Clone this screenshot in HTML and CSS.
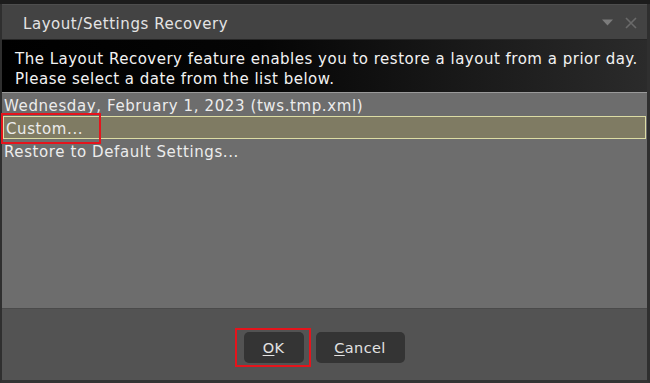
FILE: index.html
```html
<!DOCTYPE html>
<html>
<head>
<meta charset="utf-8">
<link rel="stylesheet" href="styles.css">
</head>
<body>
<div class="screen">
  <div class="topstrip"></div>
  <div class="dialog">
    <div class="titlebar">
      <span class="title">Layout/Settings Recovery</span>
      <span class="tools">
        <svg class="tri" width="11" height="7" viewBox="0 0 11 7"><path d="M0 0.5 H11 L5.5 6.5 Z" fill="#7c7c7c"/></svg>
        <svg class="close" width="12" height="12" viewBox="0 0 12 12"><path d="M1 1 L11 11 M11 1 L1 11" stroke="#6a6a6a" stroke-width="1.6"/></svg>
      </span>
    </div>
    <div class="message">
      <p>The Layout Recovery feature enables you to restore a layout from a prior day.</p>
      <p>Please select a date from the list below.</p>
    </div>
    <div class="list">
      <div class="row">Wednesday, February 1, 2023 (tws.tmp.xml)</div>
      <div class="row selected">Custom...</div>
      <div class="row">Restore to Default Settings...</div>
      <div class="mark mark-custom"></div>
    </div>
    <div class="footer">
      <button class="btn btn-ok"><u>O</u>K</button>
      <button class="btn btn-cancel"><u>C</u>ancel</button>
      <div class="mark mark-ok"></div>
    </div>
  </div>
</div>
</body>
</html>
```

FILE: styles.css
```css
* { box-sizing: border-box; }
html, body { margin: 0; padding: 0; }
body {
  background: #1e1e1e;
  font-family: "DejaVu Sans", Verdana, sans-serif;
}
.screen {
  width: 650px;
  height: 383px;
  display: flex;
  flex-direction: column;
  overflow: hidden;
}
.topstrip {
  height: 4px;
  background: #1c1c1c;
  flex: none;
}
.dialog {
  flex: 1;
  display: flex;
  flex-direction: column;
  border-left: 2px solid #2f2f2f;
  border-right: 3px solid #2f2f2f;
  border-bottom: 3px solid #333;
  background: #535353;
}
.titlebar {
  height: 35px;
  flex: none;
  background: #434343;
  border-top: 1px solid #4e4e4e;
  display: flex;
  align-items: center;
  justify-content: space-between;
  padding: 0 10px 0 21px;
  color: #e4e4e4;
  font-size: 15px;
  letter-spacing: 0.55px;
}
.title { padding-top: 3px; }
.tools {
  display: flex;
  align-items: center;
  gap: 12px;
  padding-top: 1px;
}
.message {
  height: 53px;
  flex: none;
  background: linear-gradient(to right, #000 0%, #050505 40%, #2b2b2b 100%);
  border-top: 1px solid #262626;
  padding: 9px 0 0 13px;
  color: #f2f2f2;
  font-size: 15px;
  letter-spacing: 0.5px;
  line-height: 20px;
}
.message p { margin: 0; white-space: nowrap; }
.list {
  flex: 1;
  position: relative;
  background: #6d6d6d;
  border-top: 1px solid #9a9a9a;
  color: #ececec;
  font-size: 15px;
  letter-spacing: 0.6px;
}
.row {
  height: 23px;
  padding: 4px 0 0 2px;
  line-height: 19px;
  white-space: nowrap;
}
.row.selected {
  background: #7f7b63;
  border: 1px solid #dcdca4;
  padding: 3px 0 0 2px;
  line-height: 19px;
  margin: 0 1px 0 1px;
}
.footer {
  height: 72px;
  flex: none;
  position: relative;
  background: #535353;
  border-top: 1px solid #4a4a4a;
  display: flex;
  justify-content: center;
  align-items: flex-start;
  gap: 12px;
  padding: 23px 0 0 0;
}
.btn {
  height: 31px;
  background: #343434;
  border: none;
  border-radius: 5px;
  color: #e2e2e2;
  font-family: "DejaVu Sans", Verdana, sans-serif;
  font-size: 14.5px;
  letter-spacing: 0.4px;
  padding: 0;
}
.btn u { text-underline-offset: 2px; }
.btn-ok { width: 60px; margin-left: -1px; }
.btn-cancel { width: 89px; }
.mark {
  position: absolute;
  border: 2px solid #e5141c;
  pointer-events: none;
}
.mark-custom {
  left: -1px;
  top: 20px;
  width: 100px;
  height: 31px;
}
.mark-ok {
  left: 233px;
  top: 19px;
  width: 76px;
  height: 39px;
}
```
